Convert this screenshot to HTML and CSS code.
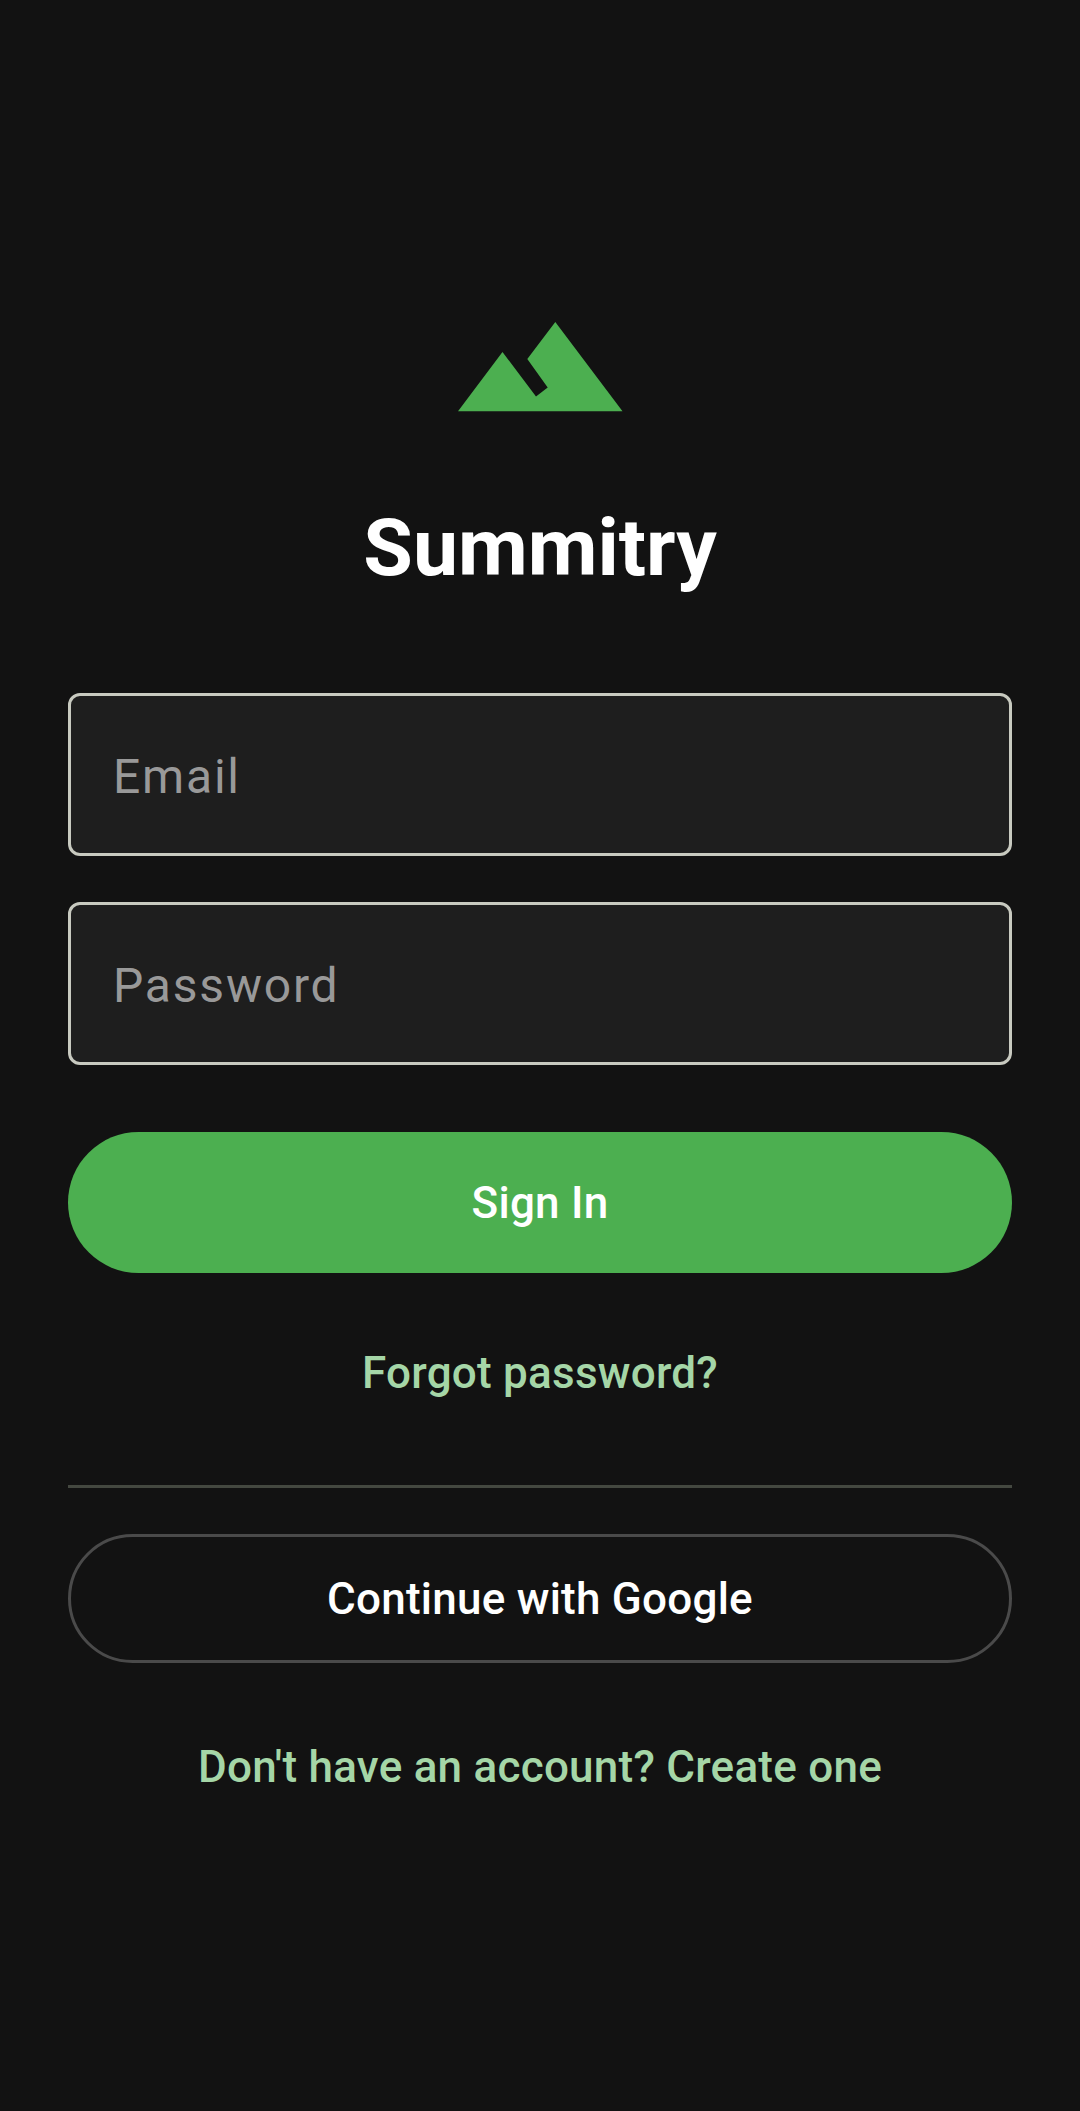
FILE: index.html
```html
<!DOCTYPE html>
<html lang="en">
<head>
    <meta charset="UTF-8">
    <meta name="viewport" content="width=device-width, initial-scale=1.0">
    <title>Summitry</title>
    <link rel="stylesheet" href="styles.css">
</head>
<body>
    <div id="login-screen">
        <svg class="logo" width="165" height="90" viewBox="0 0 165 90">
            <polygon points="0,89.3 44.5,30 78,74.5 89.7,65.5 69.3,37 97.3,0 164.5,89.3" />
        </svg>
        <h1>Summitry</h1>
        <div class="field">Email</div>
        <div class="field">Password</div>
        <button class="btn-primary">Sign In</button>
        <a class="link forgot">Forgot password?</a>
        <hr class="divider">
        <button class="btn-outline">Continue with Google</button>
        <a class="link signup">Don't have an account? Create one</a>
    </div>
</body>
</html>
```

FILE: styles.css
```css
* {
    box-sizing: border-box;
}
html, body {
    margin: 0;
    height: 2111px;
}
body {
    font-family: 'Roboto', 'Liberation Sans', sans-serif;
    background-color: #121212;
    color: #fff;
    overflow: hidden;
}
#login-screen {
    display: flex;
    flex-direction: column;
    align-items: stretch;
    padding: 322px 68px 0;
}
.logo {
    display: block;
    align-self: center;
    fill: #4caf50;
}
h1 {
    margin: 90px 0 0;
    font-size: 80.5px;
    line-height: 92px;
    font-weight: 700;
    text-align: center;
}
.field {
    height: 163px;
    padding: 3px 42px 0;
    display: flex;
    align-items: center;
    background-color: #1e1e1e;
    border: 3px solid #c8cac0;
    border-radius: 12px;
    color: #999;
    font-size: 48px;
    letter-spacing: 1.8px;
}
h1 + .field {
    margin-top: 99px;
}
.field + .field {
    margin-top: 46px;
}
button {
    display: block;
    width: 100%;
    font-family: inherit;
    color: #fff;
    cursor: pointer;
    font-size: 44px;
    letter-spacing: 0.24px;
    font-weight: 500;
    padding: 0;
}
.btn-primary {
    height: 141px;
    margin-top: 67px;
    background-color: #4caf50;
    border: none;
    border-radius: 71px;
}
.link {
    display: block;
    color: #a5d6a7;
    font-size: 44px;
    letter-spacing: 0.24px;
    line-height: 52px;
    font-weight: 500;
    text-align: center;
}
.forgot {
    margin-top: 74px;
}
.divider {
    height: 3px;
    margin: 86px 0 0;
    border: none;
    background-color: #444840;
}
.btn-outline {
    height: 129px;
    margin-top: 46px;
    background: transparent;
    border: 3px solid #4a4a4a;
    border-radius: 65px;
}
.signup {
    margin-top: 78px;
}
```
